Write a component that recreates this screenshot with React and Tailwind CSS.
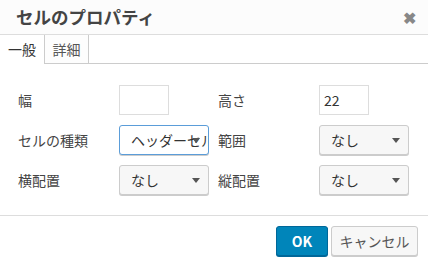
import React from "react";

const Field = ({ label, children }) => (
  <>
    <label className="flex items-center text-[14px] text-[#444]">{label}</label>
    <div className="flex items-center">{children}</div>
  </>
);

const Select = ({ value, focused }) => (
  <div
    className={`relative h-[30px] w-[90px] overflow-hidden rounded-[3px] border bg-[#f7f7f7] shadow-[0_1px_0_#ccc] ${
      focused ? "border-[#5b9dd9] bg-white shadow-[0_0_2px_rgba(30,140,190,0.8)]" : "border-[#ccc]"
    }`}
  >
    <span className="absolute left-[11px] top-[4px] whitespace-nowrap text-[14px] text-[#333]">{value}</span>
    <span className="absolute right-[8px] top-[12px] z-10 h-0 w-0 border-x-[4px] border-t-[5px] border-x-transparent border-t-[#555]" />
  </div>
);

const Input = ({ value }) => (
  <div className="flex h-[30px] w-[50px] items-center border border-[#ddd] bg-white px-[4px] text-[14px] text-[#333]">
    {value}
  </div>
);

export default function App() {
  return (
    <div className="flex h-[265px] w-[428px] flex-col bg-white font-['Noto_Sans_CJK_JP',sans-serif]">
      {/* header */}
      <div className="flex h-[35px] items-center justify-between border-b border-[#ddd] bg-[#fcfcfc] pl-[16px] pr-[12px]">
        <h1 className="text-[17.5px] font-bold text-[#444]">セルのプロパティ</h1>
        <span className="text-[16px] font-bold leading-none text-[#888]">✖</span>
      </div>

      {/* tabs */}
      <div className="flex h-[29px] bg-white">
        <div className="flex w-[44px] items-center justify-center text-[14px] text-[#333]">一般</div>
        <div className="flex w-[45px] items-center justify-center border-x border-b border-[#ccc] bg-[#fdfdfd] text-[14px] text-[#555]">
          詳細
        </div>
        <div className="flex-1 border-b border-[#ccc]" />
      </div>

      {/* body */}
      <div className="grid flex-1 grid-cols-[101px_99px_101px_90px] content-start gap-y-[10px] pl-[18px] pt-[21px]">
        <Field label="幅"><Input value="" /></Field>
        <Field label="高さ"><Input value="22" /></Field>
        <Field label="セルの種類"><Select value="ヘッダーセル" focused /></Field>
        <Field label="範囲"><Select value="なし" /></Field>
        <Field label="横配置"><Select value="なし" /></Field>
        <Field label="縦配置"><Select value="なし" /></Field>
      </div>

      {/* footer */}
      <div className="flex h-[50px] items-start justify-end gap-[3px] border-t border-[#ddd] pr-[10px] pt-[10px]">
        <button className="h-[30px] w-[52px] rounded-[3px] border border-[#006799] bg-[#0085ba] text-[14px] font-bold text-white shadow-[0_1px_0_#006799]">
          OK
        </button>
        <button className="h-[30px] w-[87px] rounded-[3px] border border-[#ccc] bg-[#f7f7f7] text-[14px] text-[#555] shadow-[0_1px_0_#ccc]">
          キャンセル
        </button>
      </div>
    </div>
  );
}
